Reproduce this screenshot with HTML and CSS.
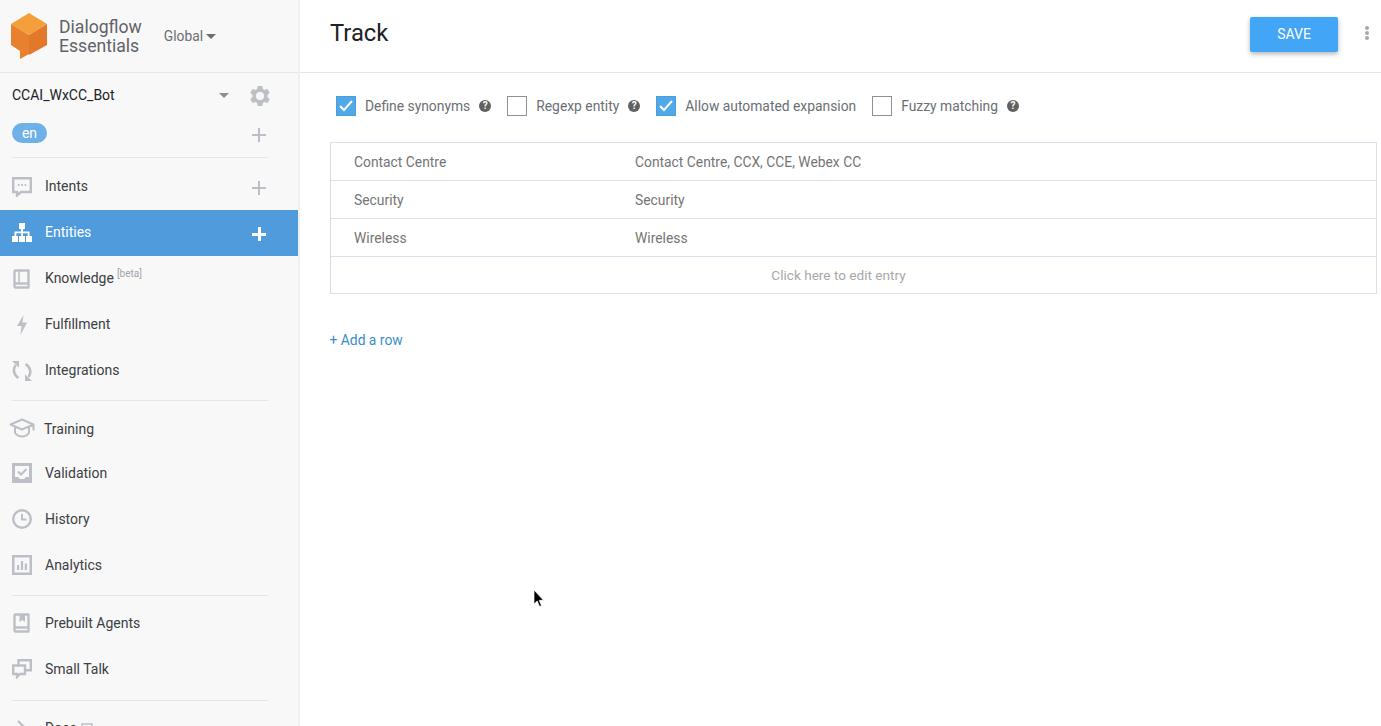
FILE: index.html
```html
<!DOCTYPE html>
<html lang="en">
<head>
    <meta charset="UTF-8">
    <meta name="viewport" content="width=device-width, initial-scale=1.0">
    <title>Dialogflow Essentials</title>
    <link rel="stylesheet" href="styles.css">
</head>
<body>
    <aside class="sidebar">
        <div class="brand">
            <svg class="logo" width="38" height="48" viewBox="0 0 38 48">
                <polygon points="19,0 37,11 19,22 1,11" fill="#f49e3c"/>
                <polygon points="1,11 19,22 19,41 10,46 10,38 1,32" fill="#e8812e"/>
                <polygon points="19,22 37,11 37,32 19,42" fill="#e3782a"/>
            </svg>
            <div class="brand-name">Dialogflow<br>Essentials</div>
            <div class="region">Global <span class="caret"></span></div>
        </div>

        <div class="agent">
            <span class="agent-name">CCAI_WxCC_Bot</span>
            <span class="caret agent-caret"></span>
            <svg class="gear" width="24" height="24" viewBox="0 0 24 24">
                <path fill="#bcc0c6" d="M19.4 13c.04-.33.1-.66.1-1s-.06-.67-.1-1l2.1-1.65c.2-.15.25-.42.12-.64l-2-3.46c-.12-.22-.39-.3-.61-.22l-2.49 1c-.52-.4-1.08-.73-1.69-.98l-.38-2.65A.49.49 0 0 0 14 2h-4c-.25 0-.46.18-.49.42l-.38 2.65c-.61.25-1.17.59-1.69.98l-2.49-1c-.23-.09-.49 0-.61.22l-2 3.46c-.13.22-.07.49.12.64L4.57 11c-.04.33-.07.66-.07 1s.03.67.07 1l-2.11 1.65c-.19.15-.25.42-.12.64l2 3.46c.12.22.39.3.61.22l2.49-1c.52.4 1.08.73 1.69.98l.38 2.65c.03.24.24.42.49.42h4c.25 0 .46-.18.49-.42l.38-2.65c.61-.25 1.17-.59 1.69-.98l2.49 1c.23.09.49 0 .61-.22l2-3.46c.12-.22.07-.49-.12-.64L19.4 13zM12 16a4 4 0 1 1 0-8 4 4 0 0 1 0 8z"/>
            </svg>
        </div>
        <div class="lang">
            <span class="lang-pill">en</span>
            <span class="plus"></span>
        </div>
        <div class="divider"></div>

        <a class="nav-item raised">
            <svg class="nav-icon" width="20" height="20" viewBox="0 0 20 20"><path fill="none" stroke="#bcc0c6" stroke-width="2.400" d="M1.200 1.200h17.600v13.800H9l-4 3.500V15H1.200z"/><path stroke="#bcc0c6" stroke-width="1.800" stroke-dasharray="1.800 1.600" d="M5.800 8h8.400"/></svg>
            <span>Intents</span>
            <span class="plus"></span>
        </a>
        <a class="nav-item raised active">
            <svg class="nav-icon" width="20" height="20" viewBox="0 0 20 20"><path fill="#fff" d="M7 0h6v6h-1.900v2.500H17.500V13H20v6h-6v-6h1.700v-2.800h-4.700V13H13v6H7v-6h2.200v-2.800H4.300V13H6v6H0v-6h2.500V8.500h6.400V6H7z"/></svg>
            <span>Entities</span>
            <span class="plus"></span>
        </a>
        <a class="nav-item raised">
            <svg class="nav-icon" width="20" height="20" viewBox="0 0 20 20"><path fill="none" stroke="#bcc0c6" stroke-width="2.400" stroke-linejoin="round" d="M2.500 15.500V2.500a1 1 0 0 1 1-1h13v17h-13a1 1 0 0 1-1-1v-2a1 1 0 0 1 1-1h13"/><path stroke="#bcc0c6" stroke-width="1.600" d="M7 2v12"/></svg>
            <span>Knowledge<sup class="beta">[beta]</sup></span>
        </a>
        <a class="nav-item raised">
            <svg class="nav-icon" width="20" height="20" viewBox="0 0 20 20"><polygon fill="#bcc0c6" points="11.500,0 5,11 9.500,11 8.500,20 15,7.500 10.500,7.500"/></svg>
            <span>Fulfillment</span>
        </a>
        <a class="nav-item raised">
            <svg class="nav-icon" width="20" height="20" viewBox="0 0 20 20"><path fill="none" stroke="#bcc0c6" stroke-width="2.600" d="M13.500 3.200A8.500 8.500 0 0 1 16.500 16M6.500 16.800A8.500 8.500 0 0 1 3.800 4"/><polygon fill="#bcc0c6" points="0,0 7,0 7,6.500"/><polygon fill="#bcc0c6" points="20,20 13,20 13,13.500"/></svg>
            <span>Integrations</span>
        </a>
        <div class="divider group-gap"></div>

        <a class="nav-item training">
            <svg class="nav-icon cap" width="26" height="20" viewBox="0 0 26 20"><path fill="none" stroke="#bcc0c6" stroke-width="2" stroke-linejoin="round" d="M1.500 6.500L13 1.500l11.500 5L13 11.500zM6 9v6c2 2.500 4.500 3.500 7 3.500s5-1 7-3.500V9M24.500 6.500v6"/></svg>
            <span>Training</span>
        </a>
        <a class="nav-item">
            <svg class="nav-icon" width="20" height="20" viewBox="0 0 20 20"><path fill="#bcc0c6" fill-rule="evenodd" d="M0 0h20v20H0zM3 3v11h3l2 2h4l2-2h3V3z"/><path fill="none" stroke="#bcc0c6" stroke-width="2" d="M6 8.500l3 3 5.500-5.500"/></svg>
            <span>Validation</span>
        </a>
        <a class="nav-item">
            <svg class="nav-icon" width="20" height="20" viewBox="0 0 20 20"><circle cx="10" cy="10" r="8.800" fill="none" stroke="#bcc0c6" stroke-width="2.400"/><path fill="none" stroke="#bcc0c6" stroke-width="2" d="M10 5v5.500h4.500"/></svg>
            <span>History</span>
        </a>
        <a class="nav-item">
            <svg class="nav-icon" width="20" height="20" viewBox="0 0 20 20"><path fill="#bcc0c6" fill-rule="evenodd" d="M0 0h20v20H0zM2.500 2.500v15h15v-15z"/><path fill="#bcc0c6" d="M5 10h2.200v5H5zM8.900 6h2.200v9H8.900zM12.800 8.500H15V15h-2.200z"/></svg>
            <span>Analytics</span>
        </a>
        <div class="divider group-gap wide-gap"></div>

        <a class="nav-item">
            <svg class="nav-icon" width="20" height="20" viewBox="0 0 20 20"><path fill="none" stroke="#bcc0c6" stroke-width="2.400" stroke-linejoin="round" d="M2.500 15.500V2.500a1 1 0 0 1 1-1h13v17h-13a1 1 0 0 1-1-1v-2a1 1 0 0 1 1-1h13"/><polygon fill="#bcc0c6" points="7.500,2 13,2 13,9 10.250,7 7.500,9"/></svg>
            <span>Prebuilt Agents</span>
        </a>
        <a class="nav-item">
            <svg class="nav-icon" width="20" height="20" viewBox="0 0 20 20"><path fill="none" stroke="#bcc0c6" stroke-width="2.400" d="M1.200 6.500h11.800v8.500H8l-3 3v-3H1.200zM6.500 6.500V1.200h12.300v10H13"/></svg>
            <span>Small Talk</span>
        </a>
        <div class="divider docs-gap"></div>

        <a class="nav-item docs">
            <svg class="nav-icon" width="20" height="20" viewBox="0 0 20 20"><path fill="none" stroke="#bcc0c6" stroke-width="2.400" d="M6 3l7 7-7 7"/></svg>
            <span>Docs</span>
            <svg class="ext-icon" width="12" height="12" viewBox="0 0 12 12"><path fill="none" stroke="#bcc0c6" stroke-width="1.500" d="M5 2H1v9h9V7M4 2h7v5"/></svg>
        </a>
    </aside>

    <main class="content">
        <header class="topbar">
            <h1>Track</h1>
            <button class="save-btn">SAVE</button>
            <div class="more"><i></i><i></i><i></i></div>
        </header>

        <div class="options">
            <label class="option">
                <span class="box checked"><svg width="14" height="12" viewBox="0 0 14 12"><path fill="none" stroke="#fff" stroke-width="2" d="M1 6l4 4 8-9"/></svg></span>
                Define synonyms
                <span class="help">?</span>
            </label>
            <label class="option">
                <span class="box"></span>
                Regexp entity
                <span class="help">?</span>
            </label>
            <label class="option">
                <span class="box checked"><svg width="14" height="12" viewBox="0 0 14 12"><path fill="none" stroke="#fff" stroke-width="2" d="M1 6l4 4 8-9"/></svg></span>
                Allow automated expansion
            </label>
            <label class="option">
                <span class="box"></span>
                Fuzzy matching
                <span class="help">?</span>
            </label>
        </div>

        <div class="entries">
            <div class="entry"><div class="entry-name">Contact Centre</div><div>Contact Centre, CCX, CCE, Webex CC</div></div>
            <div class="entry"><div class="entry-name">Security</div><div>Security</div></div>
            <div class="entry"><div class="entry-name">Wireless</div><div>Wireless</div></div>
            <div class="entry edit-hint">Click here to edit entry</div>
        </div>

        <a class="add-row">+ Add a row</a>

        <svg class="cursor" width="12" height="19" viewBox="0 0 12 19"><path fill="#000" stroke="#fff" stroke-width="0.700" d="M1 1v14l3.200-3 2.300 5.500 2-1-2.300-5.200h4.300z"/></svg>
    </main>
</body>
</html>
```

FILE: styles.css
```css
* {
    box-sizing: border-box;
}
body {
    margin: 0;
    height: 100vh;
    display: flex;
    overflow: hidden;
    background: #fff;
    font-family: Roboto, Arial, sans-serif;
    font-size: 14px;
    color: #3c4043;
}

/* sidebar */
.sidebar {
    width: 300px;
    height: 726px;
    flex-shrink: 0;
    overflow: hidden;
    background: #f8f8f8;
    border-right: 2px solid #f0f0f0;
}
.brand {
    height: 73px;
    display: flex;
    align-items: center;
    padding-left: 10px;
    border-bottom: 1px solid #e6e6e8;
}
.logo {
    margin-top: 1px;
}
.brand-name {
    margin-left: 11px;
    margin-top: 2px;
    font-size: 17.6px;
    line-height: 19px;
    color: #5f6368;
}
.region {
    margin-left: 22px;
    color: #6b6f74;
    display: flex;
    align-items: center;
    font-size: 13.8px;
}
.caret {
    display: inline-block;
    width: 0;
    height: 0;
    margin-left: 3px;
    border-left: 5px solid transparent;
    border-right: 5px solid transparent;
    border-top: 5px solid #6b6f74;
}
.agent {
    height: 44px;
    display: flex;
    align-items: center;
    padding-left: 12px;
}
.agent-name {
    flex: 1;
    margin-bottom: 1px;
    color: #202124;
}
.agent-caret {
    margin-right: 19px;
    border-top-color: #8a8e94;
}
.gear {
    margin-top: 2px;
    margin-right: 26px;
}
.lang {
    height: 40px;
    display: flex;
    align-items: flex-start;
    justify-content: space-between;
    padding-left: 12px;
    padding-top: 6px;
}
.lang-pill {
    width: 35px;
    height: 20px;
    line-height: 20px;
    text-align: center;
    border-radius: 10px;
    background: #6fb0e8;
    color: #fff;
}
.plus {
    width: 14px;
    height: 14px;
    margin-left: auto;
    margin-right: 32px;
    background:
        linear-gradient(#bcc0c6, #bcc0c6) center / 100% 2px no-repeat,
        linear-gradient(#bcc0c6, #bcc0c6) center / 2px 100% no-repeat;
}
.lang .plus {
    margin-top: 5px;
}
.nav-item .plus {
    margin-top: 2px;
}
.divider {
    height: 1px;
    margin: 0 30px 6px 12px;
    background: #e4e5e8;
}
.group-gap {
    margin-top: 6px;
    margin-bottom: 5px;
}
.wide-gap {
    margin-top: 7px;
    margin-bottom: 4px;
}
.docs-gap {
    margin-top: 8px;
    margin-bottom: 0;
}
.nav-item {
    height: 46px;
    display: flex;
    align-items: center;
    padding-left: 12px;
    color: #3c4043;
}
.raised > span:not(.plus) {
    margin-bottom: 2px;
}
.nav-icon {
    flex-shrink: 0;
    margin-right: 13px;
}
.nav-item.active {
    background: #4f9bdc;
    color: #fff;
}
.nav-item.active .plus {
    background:
        linear-gradient(#fff, #fff) center / 100% 3px no-repeat,
        linear-gradient(#fff, #fff) center / 3px 100% no-repeat;
}
.beta {
    margin-left: 3px;
    font-size: 10px;
    line-height: 0;
    color: #a0a4aa;
}
.training {
    height: 44px;
    padding-left: 9px;
}
.training span {
    margin-top: 2px;
}
.cap {
    margin-right: 9px;
}
.docs {
    padding-top: 8px;
}
.ext-icon {
    margin-left: 4px;
}

/* main */
.content {
    flex: 1;
    position: relative;
    min-width: 0;
    font-size: 13.85px;
}
.topbar {
    height: 73px;
    display: flex;
    align-items: center;
    padding-left: 30px;
    border-bottom: 1px solid #e6e6e8;
}
h1 {
    flex: 1;
    margin: 0 0 6px;
    font-size: 23.8px;
    font-weight: 400;
    color: #202124;
}
.save-btn {
    width: 88px;
    height: 35px;
    margin-bottom: 4px;
    border: 0;
    border-radius: 2px;
    background: #42a5f5;
    color: #fff;
    font-family: inherit;
    font-size: 14px;
    box-shadow: 0 2px 5px rgba(0, 0, 0, 0.3);
}
.more {
    width: 43px;
    margin-bottom: 7px;
    display: flex;
    flex-direction: column;
    align-items: center;
    gap: 1px;
    padding-left: 15px;
}
.more i {
    width: 4px;
    height: 4px;
    border-radius: 50%;
    background: #a8a8ac;
}
.options {
    height: 65px;
    margin-bottom: 4px;
    display: flex;
    align-items: center;
    padding-left: 35.5px;
    color: #6b6f74;
}
.option {
    display: flex;
    align-items: center;
    margin-right: 15.5px;
}
.box {
    width: 20px;
    height: 20px;
    margin-right: 9.5px;
    display: flex;
    align-items: center;
    justify-content: center;
    border: 1px solid #8f9195;
}
.box.checked {
    background: #4fa8e8;
    border-color: #4f9bdc;
}
.help {
    width: 12px;
    height: 12px;
    margin-left: 9px;
    border-radius: 50%;
    background: #616161;
    color: #fff;
    font-size: 10px;
    font-weight: 700;
    line-height: 12px;
    text-align: center;
}
.entries {
    margin-left: 30px;
    margin-right: 4px;
    border: 1px solid #e4dcec;
    border-left-color: #dcdcdc;
    color: #757575;
}
.entry {
    height: 38px;
    display: flex;
    align-items: center;
    border-bottom: 1px solid #e4dcec;
}
.entry:last-child {
    height: 36px;
    border-bottom: 0;
}
.entry-name {
    width: 304px;
    padding-left: 23px;
}
.edit-hint {
    justify-content: center;
    padding-right: 30px;
    font-size: 13.6px;
    color: #a8a8a8;
}
.add-row {
    display: block;
    margin: 38px 0 0 29.5px;
    color: #3a8fc7;
}
/* mouse pointer caught in the screenshot */
.cursor {
    position: absolute;
    left: 233px;
    top: 589px;
}
```
